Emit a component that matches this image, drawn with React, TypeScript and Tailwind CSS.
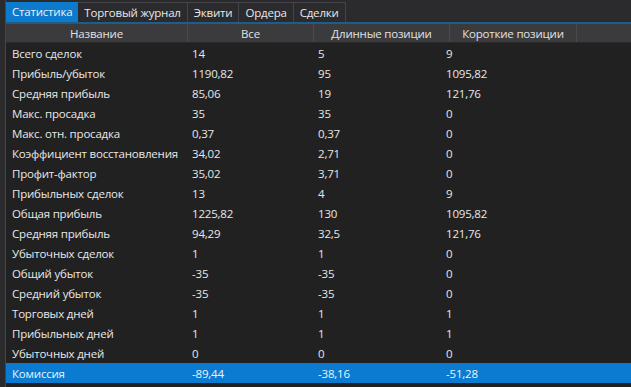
const tabs = ["Статистика", "Торговый журнал", "Эквити", "Ордера", "Сделки"];

const rows: [string, string, string, string][] = [
  ["Всего сделок", "14", "5", "9"],
  ["Прибыль/убыток", "1190,82", "95", "1095,82"],
  ["Средняя прибыль", "85,06", "19", "121,76"],
  ["Макс. просадка", "35", "35", "0"],
  ["Макс. отн. просадка", "0,37", "0,37", "0"],
  ["Коэффициент восстановления", "34,02", "2,71", "0"],
  ["Профит-фактор", "35,02", "3,71", "0"],
  ["Прибыльных сделок", "13", "4", "9"],
  ["Общая прибыль", "1225,82", "130", "1095,82"],
  ["Средняя прибыль", "94,29", "32,5", "121,76"],
  ["Убыточных сделок", "1", "1", "0"],
  ["Общий убыток", "-35", "-35", "0"],
  ["Средний убыток", "-35", "-35", "0"],
  ["Торговых дней", "1", "1", "1"],
  ["Прибыльных дней", "1", "1", "1"],
  ["Убыточных дней", "0", "0", "0"],
  ["Комиссия", "-89,44", "-38,16", "-51,28"],
];

export default function App() {
  return (
    <div
      className="w-[631px] h-[387px] overflow-hidden bg-[#2b2b2e] pl-[5px] text-[11.5px] tracking-[-0.2px] text-[#e8e8e8]"
      style={{ fontFamily: '"Open Sans", "Noto Sans", sans-serif' }}
    >
      <div className="h-full border-l border-[#45454a] bg-[#212121] flex flex-col">
        {/* tabs */}
        <div className="flex h-[22px] pt-[2px] bg-[#2b2b2e]">
          {tabs.map((t, i) => (
            <div
              key={t}
              className={
                i === 0
                  ? "px-[6px] leading-[19px] bg-[#0e7acb] text-[#e8f2fb]"
                  : "px-[6px] leading-[19px] border-r border-t border-[#44444a] text-[#e8e8e8]"
              }
            >
              {t}
            </div>
          ))}
        </div>
        <div className="h-[2px] bg-[#1d5d8c]" />
        {/* header */}
        <div className="flex h-[19px] bg-[#3b3b3d] border-b border-[#2a2a2a] text-[#e2e2e2] leading-[19px]">
          <div className="w-[182px] text-center border-r border-[#4a4a4c]">Название</div>
          <div className="w-[126px] text-center border-r border-[#4a4a4c]">Все</div>
          <div className="w-[136px] text-center border-r border-[#4a4a4c]">Длинные позиции</div>
          <div className="w-[127px] text-center border-r border-[#4a4a4c]">Короткие позиции</div>
          <div className="flex-1" />
        </div>
        {/* body */}
        <div className="flex flex-col">
          {rows.map((r, i) => {
            const sel = i === rows.length - 1;
            return (
              <div
                key={i}
                className={
                  sel
                    ? "flex h-[20px] leading-[22px] bg-[#0a7bd0] text-[#eaf4fd]"
                    : "flex h-[20px] leading-[22px]"
                }
              >
                <div className="w-[182px] pl-[6px] whitespace-nowrap">{r[0]}</div>
                <div className="w-[130px] pl-[4px]">{r[1]}</div>
                <div className="w-[128px]">{r[2]}</div>
                <div className="flex-1">{r[3]}</div>
              </div>
            );
          })}
        </div>
      </div>
    </div>
  );
}
